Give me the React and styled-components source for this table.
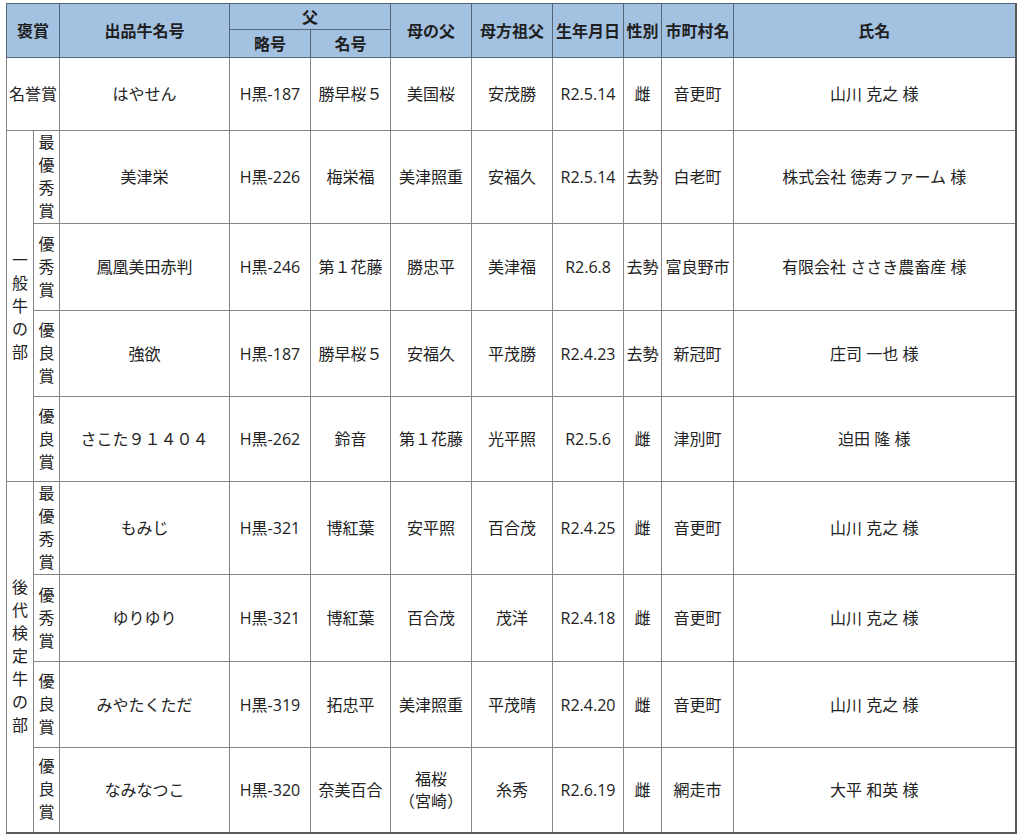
import React from "react";
import styled, {createGlobalStyle} from "styled-components";

const GlobalStyle = createGlobalStyle`
    body {
        margin: 0;
        background: #ffffff;
        font-family: "Open Sans", "Noto Sans CJK JP", sans-serif;
        color: #222222;
    }
`;

const widths = [27, 26, 170, 81, 80, 81, 81, 71, 38, 72, 282];

const groups = [
    {
        name: "一般牛の部",
        rows: [
            {award: "最優秀賞", h: 93, cow: "美津栄", code: "H黒-226", sire: "梅栄福", mSire: "美津照重", mgSire: "安福久", born: "R2.5.14", sex: "去勢", town: "白老町", owner: "株式会社 徳寿ファーム 様"},
            {award: "優秀賞", h: 87, cow: "鳳凰美田赤判", code: "H黒-246", sire: "第１花藤", mSire: "勝忠平", mgSire: "美津福", born: "R2.6.8", sex: "去勢", town: "富良野市", owner: "有限会社 ささき農畜産 様"},
            {award: "優良賞", h: 86, cow: "強欲", code: "H黒-187", sire: "勝早桜５", mSire: "安福久", mgSire: "平茂勝", born: "R2.4.23", sex: "去勢", town: "新冠町", owner: "庄司 一也 様"},
            {award: "優良賞", h: 85, cow: "さこた９１４０４", code: "H黒-262", sire: "鈴音", mSire: "第１花藤", mgSire: "光平照", born: "R2.5.6", sex: "雌", town: "津別町", owner: "迫田 隆 様"},
        ],
    },
    {
        name: "後代検定牛の部",
        rows: [
            {award: "最優秀賞", h: 92, cow: "もみじ", code: "H黒-321", sire: "博紅葉", mSire: "安平照", mgSire: "百合茂", born: "R2.4.25", sex: "雌", town: "音更町", owner: "山川 克之 様"},
            {award: "優秀賞", h: 87, cow: "ゆりゆり", code: "H黒-321", sire: "博紅葉", mSire: "百合茂", mgSire: "茂洋", born: "R2.4.18", sex: "雌", town: "音更町", owner: "山川 克之 様"},
            {award: "優良賞", h: 86, cow: "みやたくただ", code: "H黒-319", sire: "拓忠平", mSire: "美津照重", mgSire: "平茂晴", born: "R2.4.20", sex: "雌", town: "音更町", owner: "山川 克之 様"},
            {award: "優良賞", h: 85, cow: "なみなつこ", code: "H黒-320", sire: "奈美百合", mSire: ["福桜", "（宮崎）"], mgSire: "糸秀", born: "R2.6.19", sex: "雌", town: "網走市", owner: "大平 和英 様"},
        ],
    },
];

const Sheet = styled.table`
    margin: 3px 0 0 6px;
    border-collapse: collapse;
    table-layout: fixed;
    width: 1010px;
    font-size: 16px;
    border-right: 2px solid #5a5a5a;
    border-bottom: 2px solid #5a5a5a;
`;

const Row = styled.tr`
    height: ${p => p.$h}px;
`;

const Head = styled.th`
    background: #a3c2e2;
    border: 1px solid #55657a;
    font-weight: 700;
    color: #1f1f1f;
    padding: 0;
    text-align: center;
    vertical-align: middle;
    white-space: nowrap;
    line-height: 20px;
`;

const Cell = styled.td`
    border: 1px solid #858585;
    padding: 0;
    text-align: center;
    vertical-align: middle;
    white-space: nowrap;
    line-height: 22px;
`;

const Stack = styled.span`
    display: block;
    width: 1em;
    margin: 0 auto;
    line-height: ${p => p.$lh || 23}px;
    white-space: normal;
    word-break: break-all;
`;

const Line = styled.span`
    display: block;
`;

const fields = ["cow", "code", "sire", "mSire", "mgSire", "born", "sex", "town", "owner"];

const Value = ({v}) => Array.isArray(v)
    ? v.map((t, i) => <Line key={i}>{t}</Line>)
    : v;

const App = () => {
    return (
        <>
            <GlobalStyle/>
            <Sheet>
                <colgroup>
                    {widths.map((w, i) => <col key={i} style={{width: w}}/>)}
                </colgroup>
                <thead>
                    <Row $h={26}>
                        <Head colSpan={2} rowSpan={2}>褒賞</Head>
                        <Head rowSpan={2}>出品牛名号</Head>
                        <Head colSpan={2}>父</Head>
                        <Head rowSpan={2}>母の父</Head>
                        <Head rowSpan={2}>母方祖父</Head>
                        <Head rowSpan={2}>生年月日</Head>
                        <Head rowSpan={2}>性別</Head>
                        <Head rowSpan={2}>市町村名</Head>
                        <Head rowSpan={2}>氏名</Head>
                    </Row>
                    <Row $h={28}>
                        <Head>略号</Head>
                        <Head>名号</Head>
                    </Row>
                </thead>
                <tbody>
                    <Row $h={73}>
                        <Cell colSpan={2}>名誉賞</Cell>
                        <Cell>はやせん</Cell>
                        <Cell>H黒-187</Cell>
                        <Cell>勝早桜５</Cell>
                        <Cell>美国桜</Cell>
                        <Cell>安茂勝</Cell>
                        <Cell>R2.5.14</Cell>
                        <Cell>雌</Cell>
                        <Cell>音更町</Cell>
                        <Cell>山川 克之 様</Cell>
                    </Row>
                    {groups.map(g => g.rows.map((r, i) => (
                        <Row key={g.name + i} $h={r.h}>
                            {i === 0 && (
                                <Cell rowSpan={g.rows.length}>
                                    <Stack $lh={23}>{g.name}</Stack>
                                </Cell>
                            )}
                            <Cell><Stack>{r.award}</Stack></Cell>
                            {fields.map(f => <Cell key={f}><Value v={r[f]}/></Cell>)}
                        </Row>
                    )))}
                </tbody>
            </Sheet>
        </>
    );
};

export default App;
